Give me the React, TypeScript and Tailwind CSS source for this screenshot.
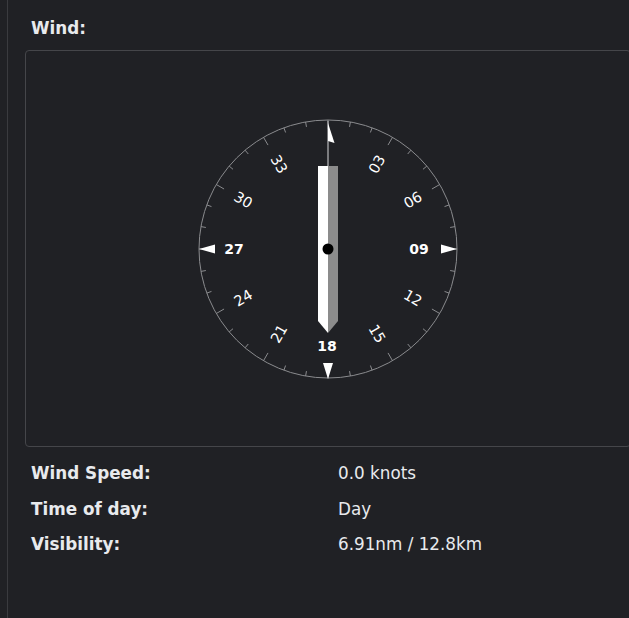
import React from 'react';

const R = 129;

const rad = (deg: number) => (deg * Math.PI) / 180;

const Compass: React.FC = () => {
  const ticks = Array.from({ length: 36 }, (_, i) => i * 10);
  const labels = [
    { a: 30, t: '03' },
    { a: 60, t: '06' },
    { a: 120, t: '12' },
    { a: 150, t: '15' },
    { a: 210, t: '21' },
    { a: 240, t: '24' },
    { a: 300, t: '30' },
    { a: 330, t: '33' },
  ];

  return (
    <svg width="300" height="300" viewBox="-150 -150 300 300" className="block">
      <circle cx="0" cy="0" r={R} fill="none" stroke="#8a8b8e" strokeWidth="1" />
      {ticks.map((a) => {
        const len = a % 30 === 0 ? 9 : 5;
        const s = Math.sin(rad(a));
        const c = -Math.cos(rad(a));
        return (
          <line
            key={a}
            x1={s * R}
            y1={c * R}
            x2={s * (R - len)}
            y2={c * (R - len)}
            stroke="#8a8b8e"
            strokeWidth="1"
          />
        );
      })}
      {labels.map(({ a, t }) => {
        const r = 98;
        const x = Math.sin(rad(a)) * r;
        const y = -Math.cos(rad(a)) * r;
        const rot = a < 180 ? a - 90 : a - 270;
        return (
          <text
            key={t}
            x={x}
            y={y}
            transform={`rotate(${rot} ${x} ${y})`}
            textAnchor="middle"
            dominantBaseline="central"
            fill="#ffffff"
            fontSize="14.5"
            fontFamily="'DejaVu Sans', sans-serif"
          >
            {t}
          </text>
        );
      })}
      <text x="-94" y="0" textAnchor="middle" dominantBaseline="central" fill="#fff" fontSize="14" fontWeight="bold" fontFamily="'DejaVu Sans', sans-serif">27</text>
      <text x="91" y="0" textAnchor="middle" dominantBaseline="central" fill="#fff" fontSize="14" fontWeight="bold" fontFamily="'DejaVu Sans', sans-serif">09</text>
      <text x="-1" y="97" textAnchor="middle" dominantBaseline="central" fill="#fff" fontSize="14" fontWeight="bold" fontFamily="'DejaVu Sans', sans-serif">18</text>
      <polygon points="-129,0 -113,-4.5 -113,4.5" fill="#fff" />
      <polygon points="129,0 113,-4.5 113,4.5" fill="#fff" />
      <polygon points="0,130 -5,114 5,114" fill="#fff" />
      <line x1="0" y1="-83" x2="0" y2="-128" stroke="#9a9b9e" strokeWidth="1.5" />
      <polygon points="0,-126 6.5,-106 0,-108" fill="#fff" />
      <polygon points="-10,-83 0,-83 0,84 -10,72" fill="#ffffff" />
      <polygon points="0,-83 10,-83 10,72 0,84" fill="#8c8c8c" />
      <circle cx="0" cy="0" r="5.5" fill="#000" />
    </svg>
  );
};

const rows = [
  { k: 'Wind Speed:', v: '0.0 knots' },
  { k: 'Time of day:', v: 'Day' },
  { k: 'Visibility:', v: '6.91nm / 12.8km' },
];

export default function App() {
  return (
    <div
      className="h-[618px] w-[629px] overflow-hidden bg-[#202125] text-[#e8eaed]"
      style={{ fontFamily: "'DejaVu Sans', sans-serif" }}
    >
      <div className="ml-[7px] h-full border-l border-[#3a3b3f] pl-[17px]">
        <h2 className="pl-[6px] pt-[18px] text-[16.8px] font-bold leading-[20px]">Wind:</h2>
        <div className="mt-[12px] flex h-[397px] w-[606px] items-center justify-center rounded-[4px] border border-[#45464a]">
          <Compass />
        </div>
        <div className="mt-[16px] flex flex-col gap-[15.5px] pl-[6px]">
          {rows.map((r) => (
            <div key={r.k} className="grid grid-cols-[307px_1fr] text-[16.8px] leading-[20px]">
              <span className="font-bold">{r.k}</span>
              <span>{r.v}</span>
            </div>
          ))}
        </div>
      </div>
    </div>
  );
}
